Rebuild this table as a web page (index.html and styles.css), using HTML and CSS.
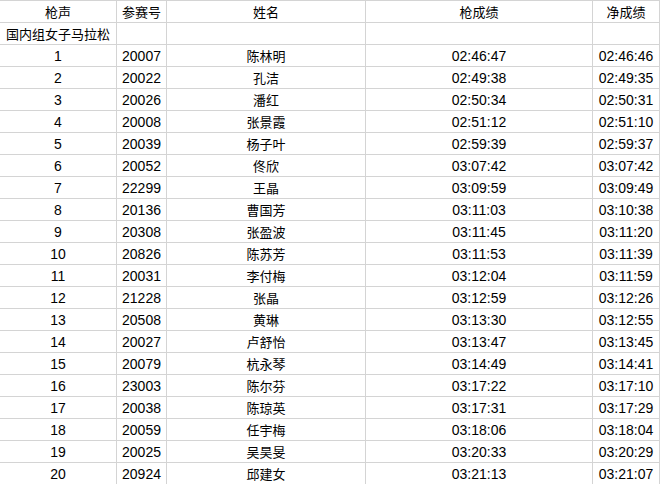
FILE: index.html
```html
<!DOCTYPE html>
<html lang="zh">
<head>
<meta charset="utf-8">
<title>成绩表</title>
<link rel="stylesheet" href="styles.css">
</head>
<body>
<div class="sheet">
  <div class="c zh">枪声</div><div class="c zh">参赛号</div><div class="c zh">姓名</div><div class="c zh">枪成绩</div><div class="c zh">净成绩</div>
  <div class="c zh left">国内组女子马拉松</div><div class="c"></div><div class="c"></div><div class="c"></div><div class="c"></div>
  <div class="c">1</div><div class="c">20007</div><div class="c zh">陈林明</div><div class="c">02:46:47</div><div class="c">02:46:46</div>
  <div class="c">2</div><div class="c">20022</div><div class="c zh">孔洁</div><div class="c">02:49:38</div><div class="c">02:49:35</div>
  <div class="c">3</div><div class="c">20026</div><div class="c zh">潘红</div><div class="c">02:50:34</div><div class="c">02:50:31</div>
  <div class="c">4</div><div class="c">20008</div><div class="c zh">张景霞</div><div class="c">02:51:12</div><div class="c">02:51:10</div>
  <div class="c">5</div><div class="c">20039</div><div class="c zh">杨子叶</div><div class="c">02:59:39</div><div class="c">02:59:37</div>
  <div class="c">6</div><div class="c">20052</div><div class="c zh">佟欣</div><div class="c">03:07:42</div><div class="c">03:07:42</div>
  <div class="c">7</div><div class="c">22299</div><div class="c zh">王晶</div><div class="c">03:09:59</div><div class="c">03:09:49</div>
  <div class="c">8</div><div class="c">20136</div><div class="c zh">曹国芳</div><div class="c">03:11:03</div><div class="c">03:10:38</div>
  <div class="c">9</div><div class="c">20308</div><div class="c zh">张盈波</div><div class="c">03:11:45</div><div class="c">03:11:20</div>
  <div class="c">10</div><div class="c">20826</div><div class="c zh">陈苏芳</div><div class="c">03:11:53</div><div class="c">03:11:39</div>
  <div class="c">11</div><div class="c">20031</div><div class="c zh">李付梅</div><div class="c">03:12:04</div><div class="c">03:11:59</div>
  <div class="c">12</div><div class="c">21228</div><div class="c zh">张晶</div><div class="c">03:12:59</div><div class="c">03:12:26</div>
  <div class="c">13</div><div class="c">20508</div><div class="c zh">黄琳</div><div class="c">03:13:30</div><div class="c">03:12:55</div>
  <div class="c">14</div><div class="c">20027</div><div class="c zh">卢舒怡</div><div class="c">03:13:47</div><div class="c">03:13:45</div>
  <div class="c">15</div><div class="c">20079</div><div class="c zh">杭永琴</div><div class="c">03:14:49</div><div class="c">03:14:41</div>
  <div class="c">16</div><div class="c">23003</div><div class="c zh">陈尔芬</div><div class="c">03:17:22</div><div class="c">03:17:10</div>
  <div class="c">17</div><div class="c">20038</div><div class="c zh">陈琼英</div><div class="c">03:17:31</div><div class="c">03:17:29</div>
  <div class="c">18</div><div class="c">20059</div><div class="c zh">任宇梅</div><div class="c">03:18:06</div><div class="c">03:18:04</div>
  <div class="c">19</div><div class="c">20025</div><div class="c zh">吴昊旻</div><div class="c">03:20:33</div><div class="c">03:20:29</div>
  <div class="c">20</div><div class="c">20924</div><div class="c zh">邱建女</div><div class="c">03:21:13</div><div class="c">03:21:07</div>
</div>
</body>
</html>
```
FILE: styles.css
```css
html, body {
  margin: 0;
  padding: 0;
  background: #ffffff;
}
.sheet {
  display: grid;
  grid-template-columns: 117px 50px 199px 227px 1fr;
  grid-auto-rows: 22px;
  width: 660px;
  font-family: "Liberation Sans", "Noto Sans CJK SC", sans-serif;
  font-size: 14px;
  color: #000;
}
.c {
  box-sizing: border-box;
  border-top: 1px solid #d4d4d4;
  border-right: 1px solid #d4d4d4;
  display: flex;
  align-items: center;
  justify-content: center;
  white-space: nowrap;
  overflow: visible;
  line-height: 1;
}
.zh {
  font-family: "Noto Sans CJK SC", sans-serif;
  font-size: 13px;
}
.left {
  justify-content: flex-start;
  padding-left: 6px;
}
```
